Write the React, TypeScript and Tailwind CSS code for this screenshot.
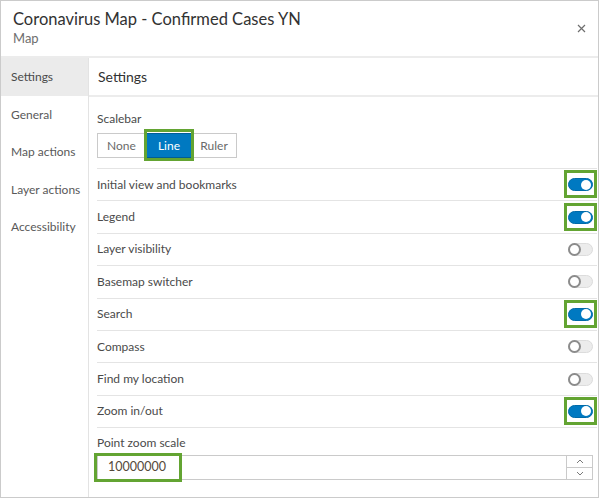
import React from "react";

const GREEN = "border-[#63a432]";

function Toggle({ on, boxed }: { on: boolean; boxed?: boolean }) {
  return (
    <div className="relative w-[25px] h-[13px] shrink-0">
      {on ? (
        <div className="w-[25px] h-[13px] rounded-full bg-[#0079c1] border border-[#006aa8] relative">
          <div className="absolute right-[1px] top-[0.5px] w-[10px] h-[10px] rounded-full bg-white" />
        </div>
      ) : (
        <div className="w-[25px] h-[13px] rounded-full bg-[#ececec] border border-[#dcdcdc] relative">
          <div className="absolute -left-[1px] -top-[1px] w-[13px] h-[13px] rounded-full bg-white border-2 border-[#8c8c8c]" />
        </div>
      )}
      {boxed && (
        <div className={`absolute -left-[4px] -right-[4px] -top-[8px] -bottom-[7px] border-[3px] ${GREEN}`} />
      )}
    </div>
  );
}

const rows: { label: string; on: boolean }[] = [
  { label: "Initial view and bookmarks", on: true },
  { label: "Legend", on: true },
  { label: "Layer visibility", on: false },
  { label: "Basemap switcher", on: false },
  { label: "Search", on: true },
  { label: "Compass", on: false },
  { label: "Find my location", on: false },
  { label: "Zoom in/out", on: true },
];

const side = ["General", "Map actions", "Layer actions", "Accessibility"];

export default function App() {
  return (
    <div className="w-[599px] h-[498px] border border-[#cbcbcb] bg-white flex flex-col overflow-hidden font-['Lato',sans-serif]">
      <div className="h-[57px] border-b-2 border-[#ececec] flex items-start justify-between pl-[12px] pr-[12px] pt-[8px] shrink-0">
        <div className="flex flex-col">
          <div className="text-[16.5px] leading-[21px] text-[#323232]">Coronavirus Map - Confirmed Cases YN</div>
          <div className="text-[13px] leading-[17px] text-[#6e6e6e]">Map</div>
        </div>
        <svg width="9" height="9" viewBox="0 0 9 9" className="mt-[15px]">
          <path d="M1 1L8 8M8 1L1 8" stroke="#6e6e6e" strokeWidth="1.2" />
        </svg>
      </div>
      <div className="flex flex-1 min-h-0">
        <div className="w-[88px] border-r border-[#e3e3e3] flex flex-col shrink-0">
          <div className="h-[38px] bg-[#ebebeb] flex items-center pl-[10px] text-[12px] text-[#4a4a4a]">Settings</div>
          {side.map((s) => (
            <div key={s} className="h-[37.5px] flex items-center pl-[10px] text-[12px] text-[#595959]">
              {s}
            </div>
          ))}
        </div>
        <div className="flex-1 flex flex-col min-w-0">
          <div className="h-[39px] border-b-2 border-[#ececec] flex items-center pl-[9px] text-[14px] text-[#323232] shrink-0">
            Settings
          </div>
          <div className="pl-[8px] pr-[1px] pt-[14px] flex flex-col">
            <div className="text-[12px] leading-[16px] text-[#4a4a4a]">Scalebar</div>
            <div className="mt-[6px] mb-[10px] flex h-[25px] text-[12px]">
              <div className="w-[49px] border border-[#cacaca] flex items-center justify-center text-[#6a6a6a]">None</div>
              <div className="relative w-[46px] bg-[#0079c1] border border-[#005e96] flex items-center justify-center text-white">
                Line
                <div className={`absolute -left-[3px] -right-[3px] -top-[5px] -bottom-[4px] border-[3px] ${GREEN}`} />
              </div>
              <div className="w-[45px] border border-[#cacaca] border-l-0 flex items-center justify-center text-[#6a6a6a]">Ruler</div>
            </div>
            {rows.map((r) => (
              <div
                key={r.label}
                className="h-[32.4px] border-t border-[#e4e4e4] flex items-center justify-between pr-[4px] text-[12px] text-[#4a4a4a]"
              >
                <span>{r.label}</span>
                <Toggle on={r.on} boxed={r.on} />
              </div>
            ))}
            <div className="border-t border-[#e4e4e4] pt-[7px] text-[12px] leading-[16px] text-[#4a4a4a]">Point zoom scale</div>
            <div className="relative mt-[4px] mr-[4px] h-[25px] flex border border-[#cacaca]">
              <div className="flex-1 flex items-center pl-[10px] text-[12.5px] text-[#55493a]">10000000</div>
              <div className="w-[26px] border-l border-[#cacaca] flex flex-col">
                <div className="flex-1 flex items-center justify-center border-b border-[#cacaca]">
                  <svg width="8" height="5" viewBox="0 0 8 5">
                    <path d="M1 4L4 1L7 4" stroke="#7a7a7a" strokeWidth="1" fill="none" />
                  </svg>
                </div>
                <div className="flex-1 flex items-center justify-center">
                  <svg width="8" height="5" viewBox="0 0 8 5">
                    <path d="M1 1L4 4L7 1" stroke="#7a7a7a" strokeWidth="1" fill="none" />
                  </svg>
                </div>
              </div>
              <div className={`absolute -left-[4px] -top-[3px] w-[88px] h-[29px] border-[3px] ${GREEN}`} />
            </div>
          </div>
        </div>
      </div>
    </div>
  );
}
